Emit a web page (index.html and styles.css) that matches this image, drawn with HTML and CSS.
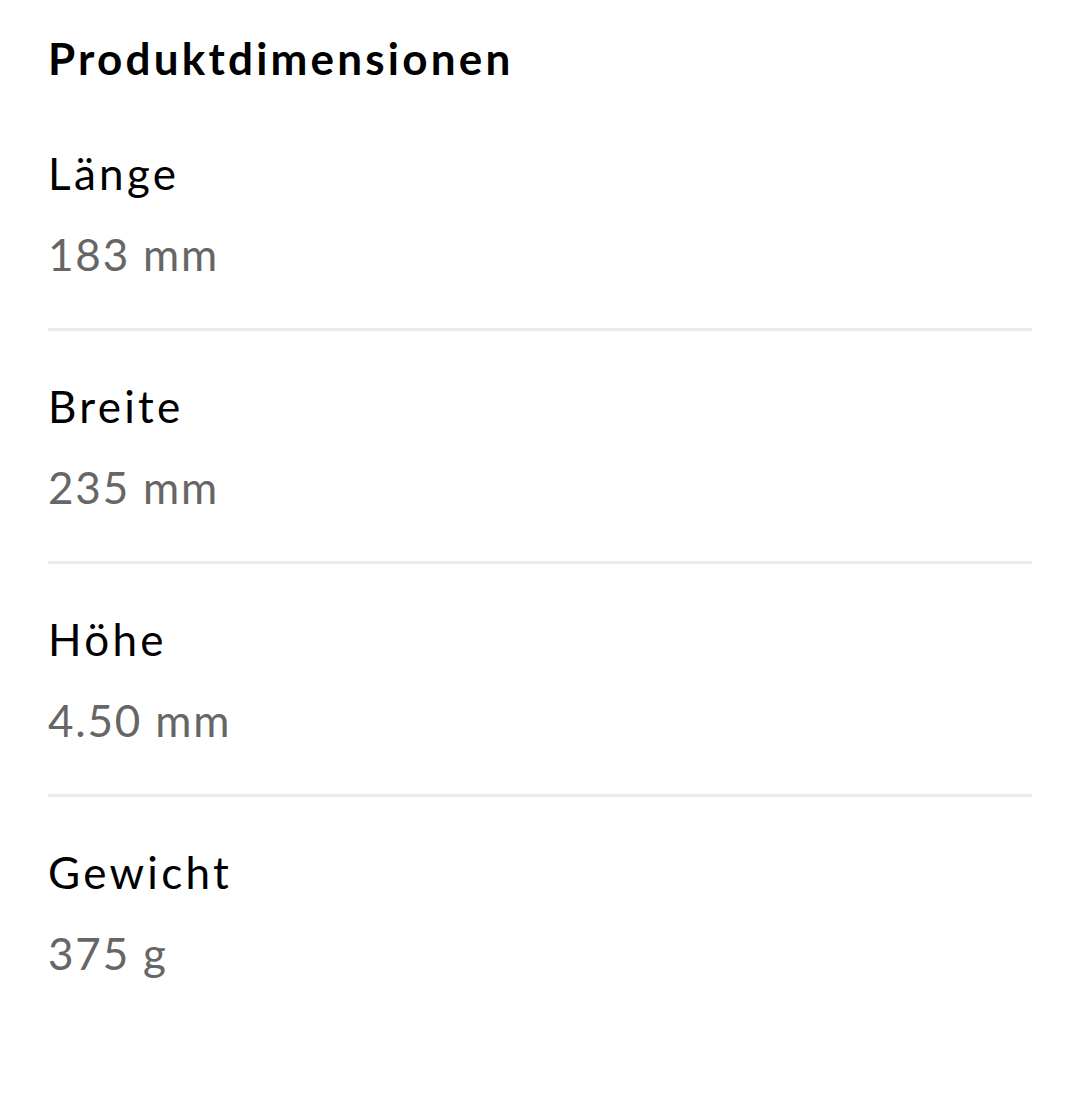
FILE: index.html
```html
<!DOCTYPE html>
<html lang="de">
<head>
<meta charset="utf-8">
<link rel="stylesheet" href="styles.css">
</head>
<body>
<section class="dims">
  <h2 class="title">Produktdimensionen</h2>
  <div class="row">
    <div class="label">Länge</div>
    <div class="value">183 mm</div>
  </div>
  <div class="row">
    <div class="label">Breite</div>
    <div class="value">235 mm</div>
  </div>
  <div class="row">
    <div class="label">Höhe</div>
    <div class="value">4.50 mm</div>
  </div>
  <div class="row last">
    <div class="label">Gewicht</div>
    <div class="value">375 g</div>
  </div>
</section>
</body>
</html>
```

FILE: styles.css
```css
html, body {
  margin: 0;
  padding: 0;
  background: #ffffff;
}
body {
  font-family: "Lato", "Noto Sans", sans-serif;
  width: 1080px;
  height: 1110px;
  overflow: hidden;
}
.dims {
  padding: 28px 48px 0 48px;
}
.title {
  margin: 0 0 10px 0;
  font-size: 44px;
  line-height: 60px;
  font-weight: 700;
  letter-spacing: 3.2px;
  color: #000;
}
.row {
  padding: 45px 0 44px 0;
  border-bottom: 3px solid #ebebeb;
  display: flex;
  flex-direction: column;
  gap: 21px;
}
.row.last {
  border-bottom: none;
}
.label {
  font-size: 44px;
  line-height: 60px;
  letter-spacing: 3.3px;
  color: #000;
}
.value {
  font-size: 44px;
  line-height: 60px;
  letter-spacing: 1.8px;
  color: #666666;
}
```
